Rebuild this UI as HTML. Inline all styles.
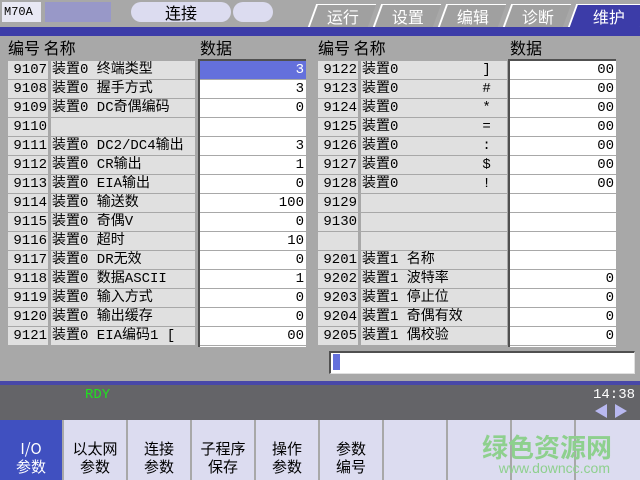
<!DOCTYPE html>
<html><head><meta charset="utf-8"><style>
*{margin:0;padding:0;box-sizing:border-box}
html,body{width:640px;height:480px;overflow:hidden}
body{background:#a8a8a8;position:relative;font-family:"Liberation Mono","Noto Sans CJK SC",monospace;font-size:14px;color:#000}
.a{position:absolute}
.top{left:0;top:0;width:640px;height:27px;background:#a8a8a8}
.bl{left:0;top:27px;width:640px;height:9px;background:#3c3ca8}
.tab{top:4px;height:23px;background:#a0a0a0;border-top:1px solid #fff;border-left:2px solid #fff;color:#fff;font-size:16px;text-align:center;line-height:22px;font-family:"Noto Sans CJK SC",sans-serif;transform:skewX(-20deg)}
.tab span{display:inline-block;transform:skewX(20deg)}
.hd{top:38px;font-size:16px;font-family:"Noto Sans CJK SC",sans-serif;line-height:18px}
.row{height:18px;line-height:18px;font-size:14px;white-space:pre;overflow:hidden}
.num{background:#e0e0e0;text-align:right;padding-right:1px}
.nm{background:#e0e0e0;padding-left:1px}
.dt{background:#fff;text-align:right;padding-right:2px;border-bottom:1px solid #a8a8a8;height:19px}
.btn{top:420px;width:62px;height:60px;background:#dcdcf0;font-size:15px;line-height:18px;text-align:center;font-family:"Noto Sans CJK SC",sans-serif;padding-top:20px}
</style></head><body>
<div class="a top"></div>
<div class="a" style="left:2px;top:2px;width:39px;height:20px;background:#e8e8f4;font-size:12px;line-height:20px;padding-left:2px">M70A</div>
<div class="a" style="left:45px;top:2px;width:66px;height:20px;background:#9898c8"></div>
<div class="a" style="left:131px;top:2px;width:100px;height:20px;background:#dcdcf0;border-radius:10px;text-align:center;font-size:16px;line-height:20px;font-family:'Noto Sans CJK SC',sans-serif">连接</div>
<div class="a" style="left:233px;top:2px;width:40px;height:20px;background:#dcdcf0;border-radius:10px"></div>
<div class="a tab" style="left:312px;width:60px"><span>运行</span></div>
<div class="a tab" style="left:377px;width:60px"><span>设置</span></div>
<div class="a tab" style="left:442px;width:60px"><span>编辑</span></div>
<div class="a tab" style="left:507px;width:60px"><span>诊断</span></div>
<div class="a tab" style="left:572px;width:72px;background:#3c3ca8"><span>维护</span></div>
<div class="a bl"></div>

<div class="a hd" style="left:8px">编号 名称</div>
<div class="a hd" style="left:200px">数据</div>
<div class="a hd" style="left:318px">编号 名称</div>
<div class="a hd" style="left:510px">数据</div>

<div class="a" style="left:8px;top:61px;width:40px">
<div class="row num">9107</div><div class="row num" style="margin-top:1px">9108</div><div class="row num" style="margin-top:1px">9109</div><div class="row num" style="margin-top:1px">9110</div><div class="row num" style="margin-top:1px">9111</div><div class="row num" style="margin-top:1px">9112</div><div class="row num" style="margin-top:1px">9113</div><div class="row num" style="margin-top:1px">9114</div><div class="row num" style="margin-top:1px">9115</div><div class="row num" style="margin-top:1px">9116</div><div class="row num" style="margin-top:1px">9117</div><div class="row num" style="margin-top:1px">9118</div><div class="row num" style="margin-top:1px">9119</div><div class="row num" style="margin-top:1px">9120</div><div class="row num" style="margin-top:1px">9121</div>
</div>
<div class="a" style="left:51px;top:61px;width:144px">
<div class="row nm">装置0 终端类型</div><div class="row nm" style="margin-top:1px">装置0 握手方式</div><div class="row nm" style="margin-top:1px">装置0 DC奇偶编码</div><div class="row nm" style="margin-top:1px"></div><div class="row nm" style="margin-top:1px">装置0 DC2/DC4输出</div><div class="row nm" style="margin-top:1px">装置0 CR输出</div><div class="row nm" style="margin-top:1px">装置0 EIA输出</div><div class="row nm" style="margin-top:1px">装置0 输送数</div><div class="row nm" style="margin-top:1px">装置0 奇偶V</div><div class="row nm" style="margin-top:1px">装置0 超时</div><div class="row nm" style="margin-top:1px">装置0 DR无效</div><div class="row nm" style="margin-top:1px">装置0 数据ASCII</div><div class="row nm" style="margin-top:1px">装置0 输入方式</div><div class="row nm" style="margin-top:1px">装置0 输出缓存</div><div class="row nm" style="margin-top:1px">装置0 EIA编码1 [</div>
</div>
<div class="a" style="left:198px;top:59px;width:108px;height:288px;border-left:2px solid #505050;border-top:2px solid #505050;background:#fff">
<div class="row dt" style="background:#6470dc;color:#fff">3</div><div class="row dt">3</div><div class="row dt">0</div><div class="row dt"></div><div class="row dt">3</div><div class="row dt">1</div><div class="row dt">0</div><div class="row dt">100</div><div class="row dt">0</div><div class="row dt">10</div><div class="row dt">0</div><div class="row dt">1</div><div class="row dt">0</div><div class="row dt">0</div><div class="row dt">00</div>
</div>

<div class="a" style="left:318px;top:61px;width:40px">
<div class="row num">9122</div><div class="row num" style="margin-top:1px">9123</div><div class="row num" style="margin-top:1px">9124</div><div class="row num" style="margin-top:1px">9125</div><div class="row num" style="margin-top:1px">9126</div><div class="row num" style="margin-top:1px">9127</div><div class="row num" style="margin-top:1px">9128</div><div class="row num" style="margin-top:1px">9129</div><div class="row num" style="margin-top:1px">9130</div><div class="row num" style="margin-top:1px"></div><div class="row num" style="margin-top:1px">9201</div><div class="row num" style="margin-top:1px">9202</div><div class="row num" style="margin-top:1px">9203</div><div class="row num" style="margin-top:1px">9204</div><div class="row num" style="margin-top:1px">9205</div>
</div>
<div class="a" style="left:361px;top:61px;width:146px">
<div class="row nm">装置0          ]</div><div class="row nm" style="margin-top:1px">装置0          #</div><div class="row nm" style="margin-top:1px">装置0          *</div><div class="row nm" style="margin-top:1px">装置0          =</div><div class="row nm" style="margin-top:1px">装置0          :</div><div class="row nm" style="margin-top:1px">装置0          $</div><div class="row nm" style="margin-top:1px">装置0          !</div><div class="row nm" style="margin-top:1px"></div><div class="row nm" style="margin-top:1px"></div><div class="row nm" style="margin-top:1px"></div><div class="row nm" style="margin-top:1px">装置1 名称</div><div class="row nm" style="margin-top:1px">装置1 波特率</div><div class="row nm" style="margin-top:1px">装置1 停止位</div><div class="row nm" style="margin-top:1px">装置1 奇偶有效</div><div class="row nm" style="margin-top:1px">装置1 偶校验</div>
</div>
<div class="a" style="left:508px;top:59px;width:108px;height:288px;border-left:2px solid #505050;border-top:2px solid #505050;background:#fff">
<div class="row dt">00</div><div class="row dt">00</div><div class="row dt">00</div><div class="row dt">00</div><div class="row dt">00</div><div class="row dt">00</div><div class="row dt">00</div><div class="row dt"></div><div class="row dt"></div><div class="row dt"></div><div class="row dt"></div><div class="row dt">0</div><div class="row dt">0</div><div class="row dt">0</div><div class="row dt">0</div>
</div>

<div class="a" style="left:329px;top:351px;width:306px;height:23px;background:#fff;border-left:2px solid #505050;border-top:2px solid #505050;border-right:1px solid #e0e0e0;border-bottom:1px solid #e0e0e0"></div>
<div class="a" style="left:333px;top:354px;width:7px;height:16px;background:#6470dc"></div>

<div class="a" style="left:0;top:381px;width:640px;height:4px;background:#4848a8"></div>
<div class="a" style="left:0;top:385px;width:640px;height:35px;background:#646468"></div>
<div class="a" style="left:85px;top:387px;color:#20e020;font-size:14px">RDY</div>
<div class="a" style="left:593px;top:387px;color:#fff;font-size:14px">14:38</div>
<div class="a" style="left:595px;top:404px;width:0;height:0;border-right:12px solid #b8b8f0;border-top:7px solid transparent;border-bottom:7px solid transparent"></div>
<div class="a" style="left:615px;top:404px;width:0;height:0;border-left:12px solid #b8b8f0;border-top:7px solid transparent;border-bottom:7px solid transparent"></div>

<div class="a btn" style="left:0;background:#4050c0;color:#fff">I/O<br>参数</div>
<div class="a btn" style="left:64px">以太网<br>参数</div>
<div class="a btn" style="left:128px">连接<br>参数</div>
<div class="a btn" style="left:192px">子程序<br>保存</div>
<div class="a btn" style="left:256px">操作<br>参数</div>
<div class="a btn" style="left:320px">参数<br>编号</div>
<div class="a btn" style="left:384px"></div>
<div class="a btn" style="left:448px"></div>
<div class="a btn" style="left:512px"></div>
<div class="a btn" style="left:576px;width:64px"></div>
<div class="a" style="left:412px;top:432px;width:200px;text-align:right;white-space:nowrap;color:#8ed08e;font-size:26px;font-weight:bold;font-family:'Noto Sans CJK SC',sans-serif;line-height:30px">绿色资源网</div>
<div class="a" style="left:412px;top:460px;width:198px;text-align:right;white-space:nowrap;color:#8ed08e;font-size:14px;font-family:'Liberation Sans',sans-serif">www.downcc.com</div>
</body></html>
